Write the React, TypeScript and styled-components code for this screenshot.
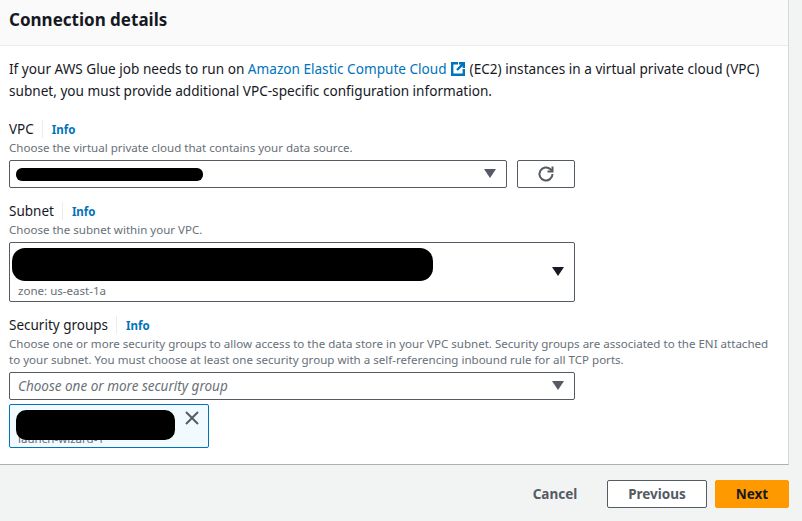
import styled, { createGlobalStyle } from "styled-components";

const Global = createGlobalStyle`
    html, body {
        margin: 0;
        padding: 0;
        background: #f2f3f3;
    }
    body {
        font-family: "Noto Sans", "Open Sans", sans-serif;
        color: #16191f;
    }
`;

const Page = styled.div`
    width: 802px;
    height: 521px;
    overflow: hidden;
`;

const Panel = styled.section`
    width: 789px;
    height: 465px;
    box-sizing: border-box;
    background: #fff;
    border-right: 1px solid #d5dbdb;
    border-bottom: 1px solid #a9b2b4;
`;

const Header = styled.header`
    height: 46px;
    box-sizing: border-box;
    padding: 7px 9px 0;
    background: #fafafa;
    border-bottom: 1px solid #eaeded;
`;

const Title = styled.h2`
    margin: 0;
    font-size: 17px;
    line-height: 26px;
    font-weight: 700;
`;

const Body = styled.div`
    padding: 12px 9px 0;
`;

const Intro = styled.p`
    margin: 0 0 18px;
    width: 770px;
    font-size: 13.6px;
    line-height: 22px;
`;

const Link = styled.a`
    color: #0073bb;
`;

const ExternalIcon = styled.svg`
    width: 14px;
    height: 14px;
    margin: 0 5px 0 4px;
    vertical-align: -2px;
    fill: none;
    stroke: #0073bb;
    stroke-width: 2.4;
`;

const Field = styled.div<{ $gap: number }>`
    margin-bottom: ${(p) => p.$gap}px;
`;

const LabelRow = styled.div`
    display: flex;
    align-items: center;
    height: 18px;
`;

const Label = styled.label`
    font-size: 13.5px;
    line-height: 18px;
    padding-right: 8px;
    border-right: 1px solid #eaeded;
`;

const InfoLink = styled.a`
    margin-left: 9px;
    font-size: 11.5px;
    font-weight: 700;
    color: #0073bb;
`;

const Hint = styled.div`
    width: 770px;
    margin-top: 2px;
    font-size: 11.55px;
    line-height: 16px;
    color: #687078;
`;

const SelectRow = styled.div`
    display: flex;
    gap: 10px;
    margin-top: 4px;
`;

const SelectBox = styled.div<{ $width: number; $height: number }>`
    position: relative;
    width: ${(p) => p.$width}px;
    height: ${(p) => p.$height}px;
    box-sizing: border-box;
    background: #fff;
    border: 1px solid #545b64;
    border-radius: 2px;
`;

const Caret = styled.svg<{ $dark?: boolean }>`
    position: absolute;
    right: 10px;
    top: 50%;
    width: 12px;
    height: 9px;
    margin-top: -5px;
    fill: ${(p) => (p.$dark ? "#16191f" : "#545b64")};
`;

const Redaction = styled.div<{ $left: number; $top: number; $width: number; $height: number; $radius: number }>`
    position: absolute;
    left: ${(p) => p.$left}px;
    top: ${(p) => p.$top}px;
    width: ${(p) => p.$width}px;
    height: ${(p) => p.$height}px;
    border-radius: ${(p) => p.$radius}px;
    background: #000;
`;

const Zone = styled.span`
    position: absolute;
    left: 8px;
    bottom: 2px;
    font-size: 11.55px;
    line-height: 16px;
    color: #687078;
`;

const Placeholder = styled.span`
    position: absolute;
    left: 8px;
    top: 4px;
    font-size: 13.5px;
    line-height: 18px;
    font-style: italic;
    color: #687078;
`;

const RefreshButton = styled.button`
    display: flex;
    align-items: center;
    justify-content: center;
    width: 58px;
    height: 28px;
    padding: 0;
    background: #fff;
    border: 1px solid #545b64;
    border-radius: 2px;
`;

const RefreshIcon = styled.svg`
    width: 18px;
    height: 18px;
    fill: none;
    stroke: #545b64;
    stroke-width: 2;
`;

const Token = styled.div`
    position: relative;
    width: 200px;
    height: 44px;
    margin-top: 4px;
    box-sizing: border-box;
    background: #f1faff;
    border: 1px solid #0073bb;
    border-radius: 2px;
`;

const TokenText = styled.span`
    position: absolute;
    left: 8px;
    bottom: 0;
    font-size: 11.55px;
    line-height: 16px;
    color: #687078;
`;

const CloseIcon = styled.svg`
    position: absolute;
    right: 9px;
    top: 6px;
    width: 14px;
    height: 14px;
    stroke: #545b64;
    stroke-width: 2;
`;

const Footer = styled.footer`
    display: flex;
    align-items: center;
    justify-content: flex-end;
    gap: 8px;
    width: 789px;
    height: 56px;
    padding-top: 1px;
    box-sizing: border-box;
`;

const widths = { link: "60px", normal: "100px", primary: "74px" };

const FooterButton = styled.button<{ $kind: "link" | "normal" | "primary" }>`
    height: 28px;
    box-sizing: border-box;
    padding: 0;
    font-family: inherit;
    font-size: 13.5px;
    font-weight: 700;
    border-radius: 2px;
    width: ${(p) => widths[p.$kind]};
    margin-right: ${(p) => (p.$kind === "link" ? "14px" : "0")};
    color: ${(p) => (p.$kind === "primary" ? "#16191f" : "#545b64")};
    background: ${(p) => (p.$kind === "primary" ? "#ff9900" : p.$kind === "normal" ? "#fff" : "transparent")};
    border: 1px solid ${(p) => (p.$kind === "primary" ? "#ff9900" : p.$kind === "normal" ? "#545b64" : "transparent")};
`;

function Arrow({ dark }: { dark?: boolean }) {
    return (
        <Caret viewBox="0 0 12 9" $dark={dark}>
            <path d="M0 0h12L6 9z" />
        </Caret>
    );
}

export default function App() {
    return (
        <Page>
            <Global />
            <Panel>
                <Header>
                    <Title>Connection details</Title>
                </Header>
                <Body>
                    <Intro>
                        If your AWS Glue job needs to run on <Link>Amazon Elastic Compute Cloud</Link>
                        <ExternalIcon viewBox="0 0 14 14">
                            <path d="M7 1.2H1.2v11.6h11.6V7" />
                            <path d="M8 1.2h4.8V6M12.8 1.2L6 8" />
                        </ExternalIcon>
                        (EC2) instances in a virtual private cloud (VPC) subnet, you must provide additional
                        VPC-specific configuration information.
                    </Intro>

                    <Field $gap={14}>
                        <LabelRow>
                            <Label>VPC</Label>
                            <InfoLink>Info</InfoLink>
                        </LabelRow>
                        <Hint>Choose the virtual private cloud that contains your data source.</Hint>
                        <SelectRow>
                            <SelectBox $width={498} $height={28}>
                                <Redaction $left={6} $top={7} $width={187} $height={13} $radius={6} />
                                <Arrow />
                            </SelectBox>
                            <RefreshButton>
                                <RefreshIcon viewBox="0 0 18 18">
                                    <path d="M15.5 9a6.5 6.5 0 1 1-2-4.7L15.5 6" />
                                    <path d="M15.5 1.5V6.5H10.5" />
                                </RefreshIcon>
                            </RefreshButton>
                        </SelectRow>
                    </Field>

                    <Field $gap={14}>
                        <LabelRow>
                            <Label>Subnet</Label>
                            <InfoLink>Info</InfoLink>
                        </LabelRow>
                        <Hint>Choose the subnet within your VPC.</Hint>
                        <SelectRow>
                            <SelectBox $width={566} $height={60}>
                                <Redaction $left={2} $top={5} $width={421} $height={33} $radius={13} />
                                <Zone>zone: us-east-1a</Zone>
                                <Arrow dark />
                            </SelectBox>
                        </SelectRow>
                    </Field>

                    <Field $gap={0}>
                        <LabelRow>
                            <Label>Security groups</Label>
                            <InfoLink>Info</InfoLink>
                        </LabelRow>
                        <Hint>
                            Choose one or more security groups to allow access to the data store in your VPC subnet.
                            Security groups are associated to the ENI attached to your subnet. You must choose at least
                            one security group with a self-referencing inbound rule for all TCP ports.
                        </Hint>
                        <SelectRow>
                            <SelectBox $width={566} $height={28}>
                                <Placeholder>Choose one or more security group</Placeholder>
                                <Arrow />
                            </SelectBox>
                        </SelectRow>
                        <Token>
                            <TokenText>launch-wizard-1</TokenText>
                            <Redaction $left={6} $top={5} $width={159} $height={30} $radius={10} />
                            <CloseIcon viewBox="0 0 14 14">
                                <path d="M1 1l12 12M13 1L1 13" />
                            </CloseIcon>
                        </Token>
                    </Field>
                </Body>
            </Panel>
            <Footer>
                <FooterButton $kind="link">Cancel</FooterButton>
                <FooterButton $kind="normal">Previous</FooterButton>
                <FooterButton $kind="primary">Next</FooterButton>
            </Footer>
        </Page>
    );
}
